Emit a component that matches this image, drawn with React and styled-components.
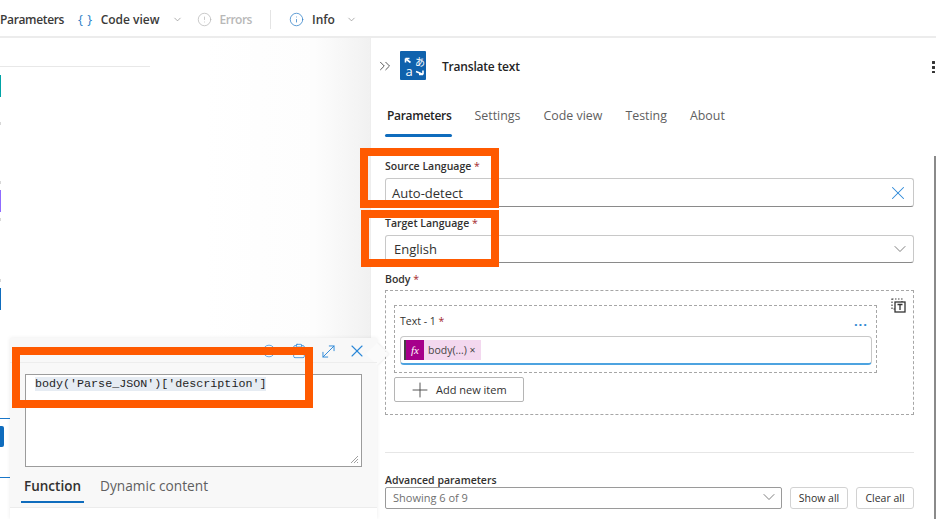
import React from 'react'
import styled, { createGlobalStyle } from 'styled-components'
import { ChevronDown, ChevronsRight, Circle, CircleAlert, Clipboard, Info, MoveDiagonal, Plus, X } from 'lucide-react'

const Global = createGlobalStyle`
  html, body { margin: 0; padding: 0; background: #fff; }
  body { width: 936px; height: 519px; overflow: hidden; font-family: "Open Sans", "Noto Sans", sans-serif; color: #242424; }
  * { box-sizing: border-box; }
`

const Page = styled.div`
  position: relative;
  width: 936px;
  height: 519px;
  overflow: hidden;
  display: flex;
  flex-direction: column;
`

// top command bar
const Toolbar = styled.div`
  flex: 0 0 38px;
  display: flex;
  align-items: center;
  padding: 2px 0 0 0;
  border-bottom: 2px solid #ececec;
  background: #fff;
  font-size: 12px;
  font-weight: 600;
`
const ToolItem = styled.span`
  margin-left: ${(p) => p.$left}px;
  color: ${(p) => (p.$muted ? '#b8b8b8' : '#3b3a39')};
  letter-spacing: ${(p) => p.$spacing || 0}px;
  white-space: nowrap;
`
const Braces = styled.span`
  margin-left: ${(p) => p.$left}px;
  color: #2f7fc7;
  font-weight: 400;
  font-size: 13px;
  letter-spacing: 0.5px;
`
const ToolIcon = styled.span`
  display: flex;
  margin-left: ${(p) => p.$left}px;
  color: ${(p) => p.$color};
`
const ToolDivider = styled.span`
  width: 1px;
  height: 19px;
  margin-left: 18px;
  background: #e4e4e4;
`

const Main = styled.div`
  flex: 1;
  display: flex;
  min-height: 0;
`

// flow canvas on the left, only node edges peek in
const Canvas = styled.div`
  position: relative;
  flex: 0 0 370px;
  background: linear-gradient(90deg, #fff 55%, #fdfdfd 85%, #f1f1f1 100%);
`
const CanvasRule = styled.div`
  position: absolute;
  left: 0;
  top: 28px;
  width: 150px;
  height: 1px;
  background: #e8e8e8;
`
const NodeEdge = styled.div`
  position: absolute;
  left: 0;
  top: ${(p) => p.$top}px;
  width: 1px;
  height: 22px;
  background: ${(p) => p.$color};
`
const NodeTick = styled.div`
  position: absolute;
  left: 0;
  top: ${(p) => p.$top}px;
  width: 1px;
  height: 3px;
  background: #d8d8d8;
`

const Panel = styled.div`
  position: relative;
  flex: 1;
  min-width: 0;
  display: flex;
  flex-direction: column;
  padding: 13px 22px 0 14px;
  background: #fff;
  border-left: 1px solid #eee;
`
const PanelHead = styled.div`
  display: flex;
  align-items: center;
  height: 29px;
  margin-left: -9px;
`
const LogoBox = styled.svg`
  width: 26px;
  height: 29px;
  margin-left: 6px;
`
const PanelTitle = styled.span`
  margin-left: 16px;
  padding-top: 1px;
  font-size: 12px;
  font-weight: 600;
  letter-spacing: -0.2px;
`
const Kebab = styled.span`
  position: absolute;
  right: 1px;
  top: 22px;
  width: 3px;
  height: 13px;
  background: radial-gradient(circle, #333 1.4px, transparent 1.6px) 0 0 / 3px 5px repeat-y;
`
const Tabs = styled.div`
  display: flex;
  gap: 23px;
  margin: 27px 0 0 2px;
  height: 30px;
`
const Tab = styled.div`
  position: relative;
  font-size: ${(p) => (p.$active ? '12px' : '12.4px')};
  line-height: 18px;
  font-weight: ${(p) => (p.$active ? 600 : 400)};
  letter-spacing: ${(p) => (p.$active ? '-0.3px' : '0')};
  color: ${(p) => (p.$active ? '#242424' : '#5f5f5f')};
  &::after {
    content: '';
    display: ${(p) => (p.$active ? 'block' : 'none')};
    position: absolute;
    left: -2px;
    right: 0;
    bottom: 0;
    height: 3px;
    border-radius: 2px;
    background: #0f6cbd;
  }
`
const Label = styled.div`
  font-size: 10.5px;
  line-height: 14px;
  font-weight: 600;
  color: #323130;
  margin-top: ${(p) => p.$top}px;
  & > b { color: #a4262c; font-weight: 400; }
`
const Field = styled.div`
  display: flex;
  align-items: center;
  justify-content: space-between;
  height: ${(p) => p.$height}px;
  margin-top: 5px;
  padding: 0 ${(p) => p.$right}px 0 ${(p) => p.$pad}px;
  background: #fff;
  border: 1px solid #c8c8c8;
  border-bottom-color: #8a8a8a;
  border-radius: 3px;
  font-size: 13px;
  color: #323130;
`
const BodyBox = styled.div`
  position: relative;
  height: 125px;
  margin-top: 4px;
  padding: 14px 0 0 8px;
  border: 1px dashed #a6a6a6;
`
const ItemBox = styled.div`
  width: 483px;
  height: 68px;
  padding: 8px 4px 0 5px;
  border: 1px dashed #a6a6a6;
`
const ItemHead = styled.div`
  display: flex;
  align-items: center;
  justify-content: space-between;
  padding-right: 4px;
  font-size: 10.5px;
  line-height: 14px;
  color: #323130;
  & b { color: #a4262c; font-weight: 400; }
`
const Dots = styled.span`
  color: #2f86d2;
  font-weight: 700;
  font-size: 13px;
  line-height: 8px;
  letter-spacing: 1px;
`
const TokenInput = styled.div`
  display: flex;
  align-items: center;
  height: 29px;
  margin-top: 8px;
  padding-left: 3px;
  border: 1px solid #c8c8c8;
  border-bottom: 2px solid #4da3e0;
  border-radius: 4px;
`
const Caret = styled.span`
  width: 2px;
  height: 20px;
  background: #444;
`
const FxBadge = styled.span`
  width: 18px;
  height: 20px;
  display: flex;
  align-items: center;
  justify-content: center;
  background: #a6008b;
  color: #fff;
  font-family: "Liberation Serif", serif;
  font-style: italic;
  font-size: 11px;
`
const TokenText = styled.span`
  height: 20px;
  display: flex;
  align-items: center;
  padding: 0 5px 0 4px;
  background: #f3d8ef;
  font-size: 10.5px;
  color: #444;
`
const AddButton = styled.button`
  display: flex;
  align-items: center;
  gap: 4px;
  width: 130px;
  height: 25px;
  margin-top: 4px;
  padding: 0 0 0 13px;
  background: #fff;
  border: 1px solid #b5b5b5;
  border-radius: 2px;
  font-family: inherit;
  font-size: 11px;
  color: #323130;
`
const CopyIcon = styled.svg`
  position: absolute;
  right: 7px;
  top: 7px;
  width: 15px;
  height: 15px;
`
const Divider = styled.div`
  height: 1px;
  margin-top: 37px;
  background: #e6e6e6;
`
const AdvancedRow = styled.div`
  display: flex;
  gap: 8px;
`
const AdvancedSelect = styled.div`
  flex: 1;
  display: flex;
  align-items: center;
  justify-content: space-between;
  height: 22px;
  padding: 0 2px 2px 7px;
  border: 1px solid #9a9a9a;
  border-radius: 2px;
  font-size: 11px;
  color: #707070;
`
const SmallButton = styled.button`
  width: 58px;
  height: 22px;
  padding: 0;
  background: #fff;
  border: 1px solid #d2d2d2;
  border-radius: 3px;
  font-family: inherit;
  font-size: 10.5px;
  color: #323130;
`
const Scrollbar = styled.div`
  position: absolute;
  right: 0;
  top: 118px;
  bottom: 0;
  width: 2px;
  background: #8a8a8a;
`

// expression editor popup
const Popup = styled.div`
  position: absolute;
  left: 10px;
  top: 338px;
  width: 367px;
  height: 181px;
  background: #f8f8f8;
  box-shadow: 0 0 4px rgba(0, 0, 0, 0.08);
  &::before {
    content: '';
    position: absolute;
    right: -8px;
    top: 8px;
    width: 16px;
    height: 16px;
    transform: rotate(45deg);
    background: #fbfbfb;
    box-shadow: 1px -1px 2px rgba(0, 0, 0, 0.06);
  }
`
const PopupHead = styled.div`
  position: relative;
  display: flex;
  align-items: center;
  justify-content: flex-end;
  height: 25px;
  padding: 2px 10px 0 0;
  border-bottom: 1px solid #ededed;
`
const HeadIcon = styled.span`
  display: flex;
  margin-left: ${(p) => p.$left}px;
  color: #2b88d8;
`
const Editor = styled.div`
  height: 93px;
  margin: 11px 15px 0 15px;
  padding: 1px 9px;
  position: relative;
  background: #fff;
  border: 1px solid #9c9c9c;
  font-family: "Liberation Mono", monospace;
  font-size: 11.7px;
  line-height: 16px;
  color: #1f1f1f;
  & > span { background: #e6ecf3; }
`
const Resizer = styled.svg`
  position: absolute;
  right: 2px;
  bottom: 2px;
  width: 9px;
  height: 9px;
`
const PopupTabs = styled.div`
  display: flex;
  gap: 19px;
  height: 41px;
  padding: 9px 0 0 14px;
  border-bottom: 1px solid #ececec;
`
const PopupTab = styled.div`
  position: relative;
  font-size: ${(p) => (p.$active ? '13.5px' : '13.7px')};
  line-height: 20px;
  font-weight: ${(p) => (p.$active ? 600 : 400)};
  color: ${(p) => (p.$active ? '#323130' : '#5f5f5f')};
  &::after {
    content: '';
    display: ${(p) => (p.$active ? 'block' : 'none')};
    position: absolute;
    left: -3px;
    right: -3px;
    top: 25px;
    height: 2px;
    background: #0f6cbd;
  }
`
const PopupFoot = styled.div`
  height: 21px;
  background: #fff;
`
const SideTab = styled.div`
  position: absolute;
  left: 0;
  top: 418px;
  width: 10px;
  height: 60px;
  border-top: 1px solid #1a77c9;
  border-bottom: 1px solid #1a77c9;
  &::before {
    content: '';
    position: absolute;
    left: 0;
    top: 7px;
    width: 4px;
    height: 21px;
    background: #0f6cbd;
    border-radius: 0 2px 2px 0;
  }
`

// orange annotations drawn on top of the screenshot
const Callout = styled.div`
  position: absolute;
  left: ${(p) => p.$x}px;
  top: ${(p) => p.$y}px;
  width: ${(p) => p.$w}px;
  height: ${(p) => p.$h}px;
  border: 8px solid #ff5a00;
`

function TranslateLogo() {
  return (
    <LogoBox viewBox="0 0 26 29">
      <rect width="26" height="29" rx="1" fill="#0f62ad" />
      <text x="20" y="15" textAnchor="middle" fontSize="10" fill="#fff" fontFamily="Noto Sans CJK JP, sans-serif">あ</text>
      <text x="9" y="25" textAnchor="middle" fontSize="13" fill="#fff" fontFamily="Open Sans, sans-serif">a</text>
      <path d="M10.500 11.500L6.500 8.500M5.500 7.500h4M5.500 7.500v4" stroke="#fff" strokeWidth="1.6" fill="none" />
      <path d="M16 20.500l6 2.500M23 23.500h-4M23 23.500v-4" stroke="#fff" strokeWidth="1.6" fill="none" />
    </LogoBox>
  )
}

export default function App() {
  return (
    <Page>
      <Global />
      <Toolbar>
        <ToolItem $left={0} $spacing={-0.35}>Parameters</ToolItem>
        <Braces $left={14}>{'{ }'}</Braces>
        <ToolItem $left={8}>Code view</ToolItem>
        <ToolIcon $left={12} $color="#8a8a8a"><ChevronDown size={11} strokeWidth={1.5} /></ToolIcon>
        <ToolIcon $left={14} $color="#b8b8b8"><CircleAlert size={15} strokeWidth={1.2} /></ToolIcon>
        <ToolItem $left={8} $muted $spacing={-0.5}>Errors</ToolItem>
        <ToolDivider />
        <ToolIcon $left={18} $color="#2f7fc7"><Info size={15} strokeWidth={1.2} /></ToolIcon>
        <ToolItem $left={8}>Info</ToolItem>
        <ToolIcon $left={11} $color="#8a8a8a"><ChevronDown size={11} strokeWidth={1.5} /></ToolIcon>
      </Toolbar>
      <Main>
        <Canvas>
          <CanvasRule />
          <NodeEdge $top={37} $color="#00a3a6" />
          <NodeTick $top={84} />
          <NodeTick $top={143} />
          <NodeEdge $top={152} $color="#8f6bff" />
          <NodeTick $top={180} />
          <NodeTick $top={241} />
          <NodeEdge $top={250} $color="#0f6cbd" />
        </Canvas>
        <Panel>
          <PanelHead>
            <ChevronsRight size={18} strokeWidth={1.3} color="#555" />
            <TranslateLogo />
            <PanelTitle>Translate text</PanelTitle>
          </PanelHead>
          <Kebab />
          <Tabs>
            <Tab $active>Parameters</Tab>
            <Tab>Settings</Tab>
            <Tab>Code view</Tab>
            <Tab>Testing</Tab>
            <Tab>About</Tab>
          </Tabs>
          <Label $top={22}>Source Language <b>*</b></Label>
          <Field $height={29} $pad={6} $right={4}>
            Auto-detect
            <X size={22} strokeWidth={1.1} color="#2b88d8" />
          </Field>
          <Label $top={9}>Target Language <b>*</b></Label>
          <Field $height={28} $pad={8} $right={3}>
            English
            <ChevronDown size={20} strokeWidth={1} color="#666" />
          </Field>
          <Label $top={9}>Body <b>*</b></Label>
          <BodyBox>
            <ItemBox>
              <ItemHead>
                <span>Text - 1 <b>*</b></span>
                <Dots>...</Dots>
              </ItemHead>
              <TokenInput>
                <Caret />
                <FxBadge>fx</FxBadge>
                <TokenText>body(...) ×</TokenText>
              </TokenInput>
            </ItemBox>
            <AddButton>
              <Plus size={24} strokeWidth={0.9} color="#444" />
              Add new item
            </AddButton>
            <CopyIcon viewBox="0 0 15 15">
              <rect x="1" y="1" width="10" height="10" fill="none" stroke="#444" strokeWidth="1.2" strokeDasharray="1.5 1.5" />
              <rect x="4" y="4" width="10" height="10" fill="#fff" stroke="#333" strokeWidth="1.3" />
              <path d="M6.500 6.500h5M9 6.500v5.500" stroke="#333" strokeWidth="1.3" fill="none" />
            </CopyIcon>
          </BodyBox>
          <Divider />
          <Label $top={20}>Advanced parameters</Label>
          <AdvancedRow>
            <AdvancedSelect>
              Showing 6 of 9
              <ChevronDown size={20} strokeWidth={1} color="#666" />
            </AdvancedSelect>
            <SmallButton>Show all</SmallButton>
            <SmallButton>Clear all</SmallButton>
          </AdvancedRow>
          <Scrollbar />
        </Panel>
      </Main>
      <SideTab />
      <Popup>
        <PopupHead>
          <HeadIcon><Circle size={14} strokeWidth={1.2} /></HeadIcon>
          <HeadIcon $left={15}><Clipboard size={16} strokeWidth={1.2} /></HeadIcon>
          <HeadIcon $left={12}><MoveDiagonal size={19} strokeWidth={1.2} /></HeadIcon>
          <HeadIcon $left={9}><X size={20} strokeWidth={1.3} /></HeadIcon>
        </PopupHead>
        <Editor>
          <span>body('Parse_JSON')['description']</span>
          <Resizer viewBox="0 0 9 9">
            <path d="M1 8l7-7M4 8l4-4M7 8l1-1" stroke="#888" strokeWidth="0.8" fill="none" />
          </Resizer>
        </Editor>
        <PopupTabs>
          <PopupTab $active>Function</PopupTab>
          <PopupTab>Dynamic content</PopupTab>
        </PopupTabs>
        <PopupFoot />
      </Popup>
      <Callout $x={360} $y={148} $w={139} $h={60} />
      <Callout $x={361} $y={210} $w={138} $h={57} />
      <Callout $x={12} $y={347} $w={301} $h={61} />
    </Page>
  )
}
